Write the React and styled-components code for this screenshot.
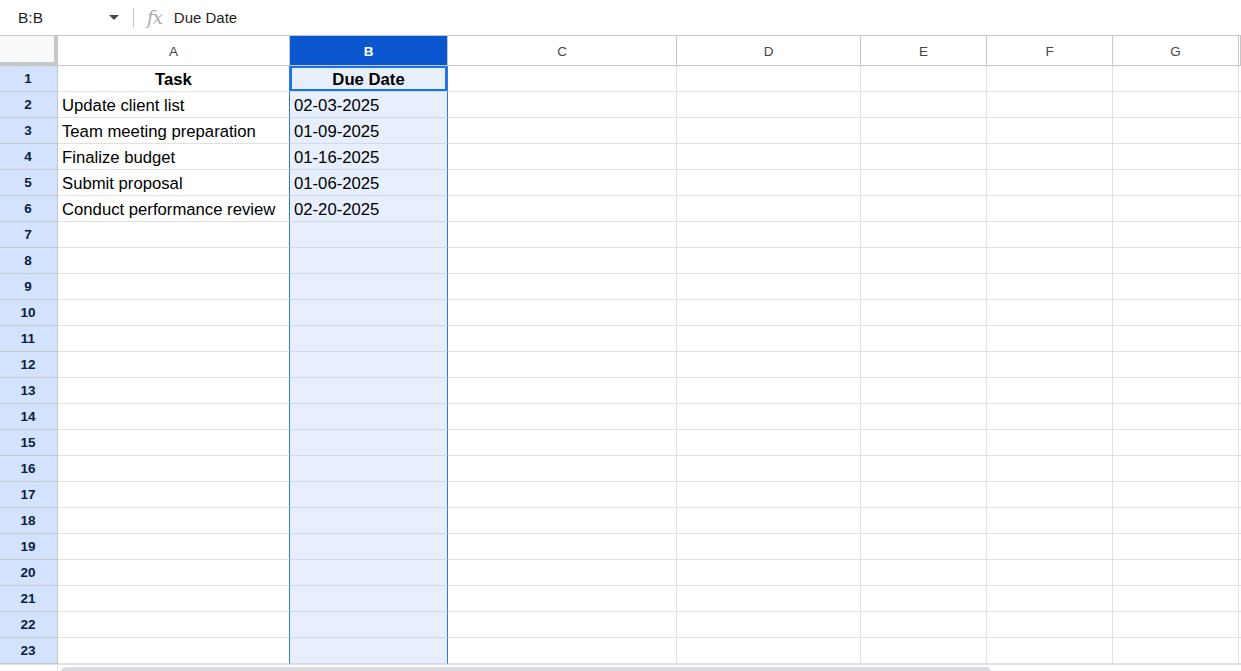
import styled, { createGlobalStyle } from 'styled-components';

const GlobalStyle = createGlobalStyle`
  html, body {
    margin: 0;
    padding: 0;
    background: #ffffff;
    overflow: hidden;
  }
  body {
    font-family: 'Liberation Sans', Arial, sans-serif;
  }
`;

const COLS = [
  { key: 'A', width: 232 },
  { key: 'B', width: 158 },
  { key: 'C', width: 229 },
  { key: 'D', width: 184 },
  { key: 'E', width: 126 },
  { key: 'F', width: 126 },
  { key: 'G', width: 126 },
  { key: 'H', width: 2, hidden: true },
];

const ROWS = [
  ['Task', 'Due Date'],
  ['Update client list', '02-03-2025'],
  ['Team meeting preparation', '01-09-2025'],
  ['Finalize budget', '01-16-2025'],
  ['Submit proposal', '01-06-2025'],
  ['Conduct performance review', '02-20-2025'],
];

const ROW_COUNT = 23;
const SELECTED = 'B';

const Page = styled.div`
  width: 1241px;
  height: 671px;
  display: flex;
  flex-direction: column;
  overflow: hidden;
  & > * {
    flex-shrink: 0;
  }
`;

const FormulaBar = styled.div`
  height: 35px;
  border-bottom: 1px solid #c4c7c5;
  display: flex;
  align-items: center;
  color: #1f1f1f;
  font-size: 15.5px;
`;

const NameBox = styled.div`
  width: 125px;
  padding-left: 18px;
  box-sizing: border-box;
  display: flex;
  align-items: center;
  justify-content: space-between;
  padding-right: 6px;
`;

const Caret = styled.span`
  width: 0;
  height: 0;
  border-left: 5px solid transparent;
  border-right: 5px solid transparent;
  border-top: 5px solid #444746;
`;

const Divider = styled.span`
  width: 1px;
  height: 20px;
  background: #c4c7c5;
  margin: 0 13px 0 8px;
`;

const Fx = styled.span`
  font-family: 'DejaVu Serif', 'Liberation Serif', serif;
  font-style: italic;
  font-size: 18px;
  color: #a8abaa;
  margin-right: 12px;
  letter-spacing: -1px;
`;

const FormulaText = styled.span`
  font-size: 15px;
`;

const Sheet = styled.div`
  display: grid;
  grid-template-columns: 58px ${COLS.map((c) => `${c.width}px`).join(' ')};
  grid-template-rows: 30px repeat(${ROW_COUNT}, 26px);
`;

const Corner = styled.div`
  background: #f8f9fa;
  border-right: 4px solid #c4c7c5;
  border-bottom: 4px solid #c4c7c5;
  box-sizing: border-box;
`;

const ColHead = styled.div`
  box-sizing: border-box;
  border-right: 1px solid #c4c7c5;
  border-bottom: 1px solid #c4c7c5;
  display: flex;
  align-items: center;
  justify-content: center;
  font-size: 13.5px;
  color: ${(p) => (p.$selected ? '#ffffff' : '#444746')};
  background: ${(p) => (p.$selected ? '#0b57d0' : '#ffffff')};
  font-weight: ${(p) => (p.$selected ? 700 : 400)};
  padding-top: 2px;
`;

const RowHead = styled.div`
  box-sizing: border-box;
  background: #d3e3fd;
  border-right: 1px solid #c4c7c5;
  border-bottom: 1px solid #c4c7c5;
  display: flex;
  align-items: center;
  justify-content: center;
  padding-right: 1px;
  font-size: 13.5px;
  font-weight: 700;
  color: #0b1d3f;
`;

const Cell = styled.div`
  box-sizing: border-box;
  border-right: 1px solid ${(p) => (p.$selected ? '#2a7ae2' : '#e1e1e1')};
  border-left: ${(p) => (p.$selected ? '1px solid #2a7ae2' : '0')};
  margin-left: ${(p) => (p.$selected ? '-1px' : '0')};
  border-bottom: 1px solid ${(p) => (p.$selected ? '#cbd8ef' : '#e1e1e1')};
  background: ${(p) => (p.$selected ? '#e7effd' : '#ffffff')};
  display: flex;
  align-items: center;
  justify-content: ${(p) => (p.$header ? 'center' : 'flex-start')};
  padding: 2px 4px 0 4px;
  font-size: 16.7px;
  font-weight: ${(p) => (p.$header ? 700 : 400)};
  color: #000000;
  white-space: nowrap;
  overflow: hidden;
  box-shadow: ${(p) => (p.$active ? 'inset 0 0 0 2px #1a73e8' : 'none')};
`;

const ScrollArea = styled.div`
  display: flex;
  height: 8px;
  border-top: 1px solid #e1e1e1;
`;

const ScrollGutter = styled.div`
  width: 58px;
  border-right: 1px solid #e1e1e1;
  box-sizing: border-box;
`;

const ScrollThumb = styled.div`
  margin-left: 3px;
  margin-top: 2px;
  width: 930px;
  height: 10px;
  border-radius: 5px;
  background: #dadce0;
`;

export default function App() {
  const rows = Array.from({ length: ROW_COUNT }, (_, i) => ROWS[i] || []);
  return (
    <Page>
      <GlobalStyle />
      <FormulaBar>
        <NameBox>
          B:B
          <Caret />
        </NameBox>
        <Divider />
        <Fx>fx</Fx>
        <FormulaText>Due Date</FormulaText>
      </FormulaBar>
      <Sheet>
        <Corner />
        {COLS.map((c) => (
          <ColHead key={c.key} $selected={c.key === SELECTED}>
            {c.hidden ? '' : c.key}
          </ColHead>
        ))}
        {rows.map((row, r) => [
          <RowHead key={`h${r}`}>{r + 1}</RowHead>,
          ...COLS.map((c, ci) => (
            <Cell
              key={`${r}-${c.key}`}
              $selected={c.key === SELECTED}
              $header={r === 0}
              $active={r === 0 && c.key === SELECTED}
            >
              {row[ci] || ''}
            </Cell>
          )),
        ])}
      </Sheet>
      <ScrollArea>
        <ScrollGutter />
        <ScrollThumb />
      </ScrollArea>
    </Page>
  );
}
